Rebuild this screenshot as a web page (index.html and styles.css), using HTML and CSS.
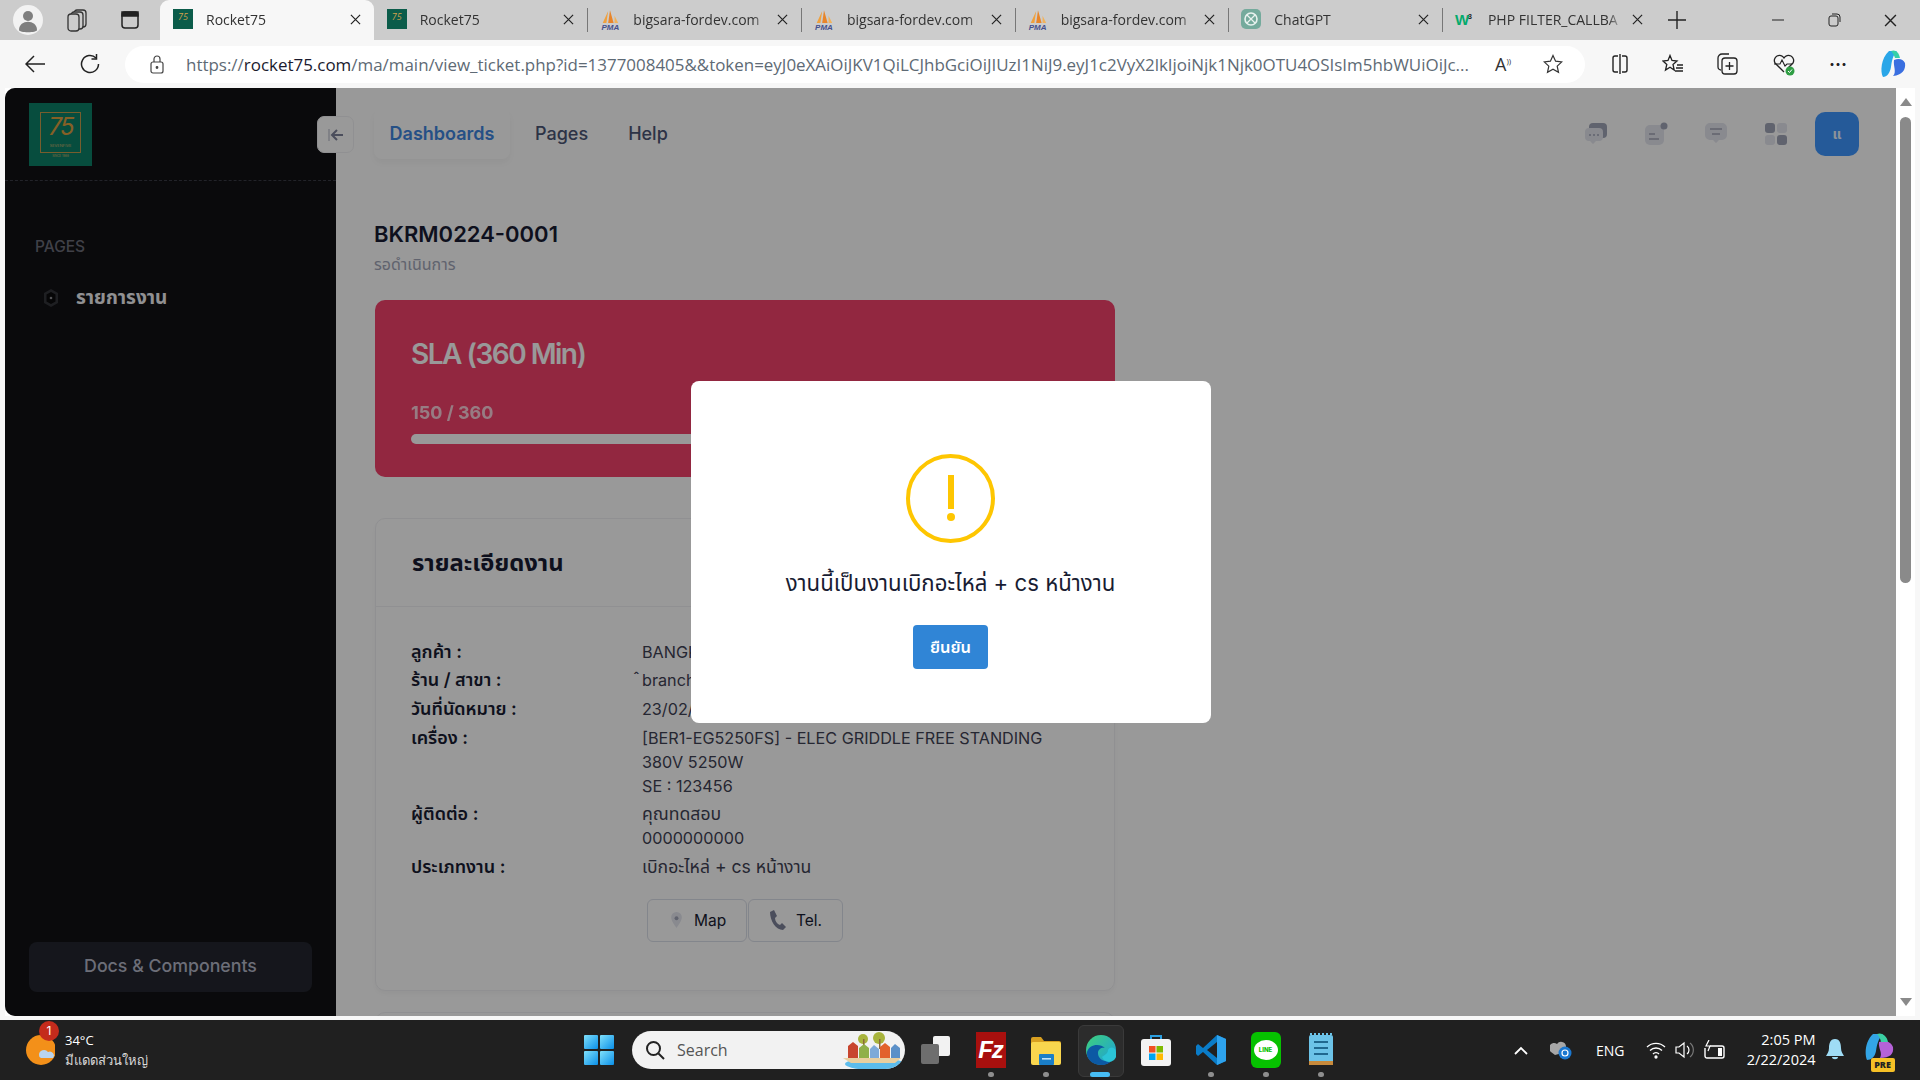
FILE: index.html
```html
<!DOCTYPE html>
<html lang="th">
<head>
    <meta charset="UTF-8">
    <title>Rocket75</title>
    <link rel="stylesheet" href="styles.css">
</head>
<body>
    <svg class="defs" width="0" height="0">
        <symbol id="pma" viewBox="0 0 22 15">
            <path d="M9 1 L7 14 H3 Z" fill="#f0a03c"/>
            <path d="M11 0 L15 14 H9 Z" fill="#e8852a"/>
            <path d="M16 6 L20 14 H16 Z" fill="#f2b25a"/>
        </symbol>
        <symbol id="x" viewBox="0 0 12 12">
            <path d="M1 1 L11 11 M11 1 L1 11" stroke="#222" stroke-width="1.3" fill="none"/>
        </symbol>
    </svg>

    <div class="tabstrip">
        <div class="strip-left">
            <span class="profile">
                <svg width="24" height="30" viewBox="0 0 24 30"><circle cx="12" cy="11" r="5" fill="#7f7f7f"/><path d="M3 25 c0-11 18-11 18 0 c0 3-18 3-18 0z" fill="#7f7f7f"/></svg>
            </span>
            <span class="strip-icon">
                <svg width="22" height="24" viewBox="0 0 22 24" fill="none" stroke="#333" stroke-width="1.3"><rect x="8" y="2" width="12" height="17" rx="3"/><rect x="5" y="4" width="12" height="17" rx="3" fill="#ccc"/><rect x="2" y="6" width="11" height="17" rx="3" fill="#ccc"/></svg>
            </span>
            <span class="strip-icon">
                <svg width="20" height="20" viewBox="0 0 20 20" fill="none" stroke="#222" stroke-width="1.5"><rect x="2" y="2" width="16" height="16" rx="3"/><rect x="2" y="2" width="16" height="4" fill="#222"/></svg>
            </span>
        </div>
        <div class="tab active">
            <span class="fav-75">75</span>
            <span class="tab-title">Rocket75</span>
            <svg class="tab-x" width="11" height="11"><use href="#x"/></svg>
        </div>
        <div class="tab">
            <span class="fav-75">75</span>
            <span class="tab-title">Rocket75</span>
            <svg class="tab-x" width="11" height="11"><use href="#x"/></svg>
        </div>
        <div class="tab sep">
            <span class="fav-pma"><svg width="20" height="14"><use href="#pma"/></svg><i>PMA</i></span>
            <span class="tab-title">bigsara-fordev.com</span>
            <svg class="tab-x" width="11" height="11"><use href="#x"/></svg>
        </div>
        <div class="tab sep">
            <span class="fav-pma"><svg width="20" height="14"><use href="#pma"/></svg><i>PMA</i></span>
            <span class="tab-title">bigsara-fordev.com</span>
            <svg class="tab-x" width="11" height="11"><use href="#x"/></svg>
        </div>
        <div class="tab sep">
            <span class="fav-pma"><svg width="20" height="14"><use href="#pma"/></svg><i>PMA</i></span>
            <span class="tab-title">bigsara-fordev.com</span>
            <svg class="tab-x" width="11" height="11"><use href="#x"/></svg>
        </div>
        <div class="tab sep">
            <svg class="fav" width="20" height="20" viewBox="0 0 20 20"><rect width="20" height="20" rx="5" fill="#74aa9c"/><circle cx="10" cy="10" r="6" fill="none" stroke="#e8f2ef" stroke-width="1.6"/><path d="M6 6 L14 14 M14 6 L6 14" stroke="#e8f2ef" stroke-width="1.2"/></svg>
            <span class="tab-title">ChatGPT</span>
            <svg class="tab-x" width="11" height="11"><use href="#x"/></svg>
        </div>
        <div class="tab sep">
            <span class="fav-w3">W<sup>3</sup></span>
            <span class="tab-title">PHP FILTER_CALLBA</span>
            <svg class="tab-x" width="11" height="11"><use href="#x"/></svg>
        </div>
        <div class="new-tab">
            <svg width="18" height="18" viewBox="0 0 18 18"><path d="M9 0 V18 M0 9 H18" stroke="#222" stroke-width="1.4"/></svg>
        </div>
        <div class="win-controls">
            <svg width="12" height="12" viewBox="0 0 12 12"><path d="M0 6 H12" stroke="#222"/></svg>
            <svg width="14" height="14" viewBox="0 0 14 14" fill="none" stroke="#222"><rect x="2" y="3" width="9" height="10" rx="2"/><path d="M5 1 H10 a3 3 0 0 1 3 3 V9"/></svg>
            <svg width="13" height="13"><use href="#x"/></svg>
        </div>
    </div>

    <div class="toolbar">
        <span class="tool-btn first">
            <svg width="20" height="18" viewBox="0 0 20 18" fill="none" stroke="#222" stroke-width="1.5"><path d="M9 1 L1 9 L9 17 M1 9 H20"/></svg>
        </span>
        <span class="tool-btn">
            <svg width="20" height="20" viewBox="0 0 20 20" fill="none" stroke="#222" stroke-width="1.5"><path d="M16 4 A8.5 8.5 0 1 0 18.5 10"/><path d="M16.5 0 V5 H11.5"/></svg>
        </span>
        <div class="address">
            <svg class="lock" width="14" height="19" viewBox="0 0 14 19" fill="none" stroke="#444" stroke-width="1.2"><rect x="1" y="7" width="12" height="11" rx="2"/><path d="M4 7 V4 a3 3 0 0 1 6 0 V7"/><circle cx="7" cy="12.5" r=".8" fill="#444"/></svg>
            <span class="url">https://<b>rocket75.com</b>/ma/main/view_ticket.php?id=1377008405&amp;&amp;token=eyJ0eXAiOiJKV1QiLCJhbGciOiJIUzI1NiJ9.eyJ1c2VyX2lkIjoiNjk1Njk0OTU4OSIsIm5hbWUiOiJc...</span>
            <span class="read">A<sup>))</sup></span>
            <svg class="star" width="20" height="20" viewBox="0 0 20 20" fill="none" stroke="#333" stroke-width="1.2"><path d="M10 1.5 L12.6 7.2 L18.8 7.9 L14.2 12.1 L15.5 18.3 L10 15.2 L4.5 18.3 L5.8 12.1 L1.2 7.9 L7.4 7.2 Z"/></svg>
        </div>
        <div class="tool-right">
            <svg width="18" height="20" viewBox="0 0 18 20" fill="none" stroke="#222" stroke-width="1.4"><path d="M7 2 H4 a2 2 0 0 0-2 2 V16 a2 2 0 0 0 2 2 H7 M11 2 H14 a2 2 0 0 1 2 2 V16 a2 2 0 0 1-2 2 H11 M9 0 V20"/></svg>
            <svg width="22" height="20" viewBox="0 0 22 20" fill="none" stroke="#222" stroke-width="1.3"><path d="M8 1.5 L10 6.5 L15 7 L11 10.5 L12.2 16 L8 13.2 L3.5 16 L4.8 10.5 L1 7 L6 6.5 Z"/><path d="M15 11 H21 M14 14 H21 M13 17 H21"/></svg>
            <svg width="22" height="24" viewBox="0 0 22 24" fill="none" stroke="#222" stroke-width="1.3"><path d="M4 18 a3 3 0 0 1-3-3 V6 a4 4 0 0 1 4-4 H12"/><rect x="5" y="6" width="15" height="16" rx="3"/><path d="M12.5 10 V18 M8.5 14 H16.5"/></svg>
            <svg width="24" height="24" viewBox="0 0 24 24"><path d="M12 20 L3 11 a5 5 0 0 1 9-5 a5 5 0 0 1 9 5 L16 16" fill="none" stroke="#222" stroke-width="1.3"/><path d="M2 12 H8 L10 8 L13 14 L15 12 H20" fill="none" stroke="#222" stroke-width="1.1"/><circle cx="18" cy="19" r="4.5" fill="#2f9e44"/><path d="M16 19 L17.5 20.5 L20 17.5" stroke="#fff" fill="none"/></svg>
            <span class="dots">···</span>
            <svg width="26" height="28" viewBox="0 0 26 28"><path d="M9 1 H17 C13 5 12 10 11 17 C10 23 7 27 3 27 C0 22 1 8 9 1Z" fill="#2aa6e8"/><path d="M14 10 C19 8 23 9 25 13 C26 20 22 25 13 26 C17 22 13 16 14 10Z" fill="#3a6fe0"/><path d="M11 1 C15 -1 19 2 20 8 L15 8 C14 5 13 3 11 1Z" fill="#37d0a8"/></svg>
        </div>
    </div>

    <div class="viewport">
        <div class="app">
            <aside class="sidebar">
                <div class="side-logo">
                    <div class="logo-mark">
                        <div class="logo-frame">
                            <span class="logo-num">75</span>
                            <span class="logo-name">SEVENFIVE</span>
                        </div>
                        <span class="logo-since">SINCE 1988</span>
                    </div>
                </div>
                <div class="side-heading">PAGES</div>
                <div class="side-item">
                    <svg width="16" height="20" viewBox="0 0 16 20" fill="none"><path d="M8 1 L15 5 V15 L8 19 L1 15 V5 Z" fill="#33343a"/><path d="M8 4 L12.5 6.5 V13.5 L8 16 L3.5 13.5 V6.5 Z" fill="#0a0a0c"/><circle cx="8" cy="10" r="1.3" fill="#8a8a90"/></svg>
                    <span>รายการงาน</span>
                </div>
                <div class="docs-btn">Docs &amp; Components</div>
            </aside>

            <main class="main">
                <header class="topbar">
                    <nav class="topnav">
                        <a class="nav-link current" href="#">Dashboards</a>
                        <a class="nav-link" href="#">Pages</a>
                        <a class="nav-link" href="#">Help</a>
                    </nav>
                    <div class="top-icons">
                        <svg width="24" height="24" viewBox="0 0 24 24"><rect x="5" y="1" width="18" height="15" rx="4" fill="#a1a5b7"/><path d="M5 6 H15 a4 4 0 0 1 4 4 V15 a4 4 0 0 1-4 4 H12 L9 22 L6 19 H5 a4 4 0 0 1-4-4 V10 a4 4 0 0 1 4-4Z" fill="#e4e6ef"/><circle cx="6" cy="13" r="1" fill="#a1a5b7"/><circle cx="10" cy="13" r="1" fill="#a1a5b7"/><circle cx="14" cy="13" r="1" fill="#a1a5b7"/></svg>
                        <svg width="24" height="24" viewBox="0 0 24 24"><rect x="1" y="3" width="19" height="20" rx="5" fill="#e4e6ef"/><circle cx="20" cy="4" r="3.5" fill="#a1a5b7"/><path d="M5 12 H11 M5 17 H15" stroke="#a1a5b7" stroke-width="1.6"/></svg>
                        <svg width="24" height="24" viewBox="0 0 24 24"><path d="M6 1 H18 a5 5 0 0 1 5 5 V13 a5 5 0 0 1-5 5 H15 L12 21 L9 18 H6 a5 5 0 0 1-5-5 V6 a5 5 0 0 1 5-5Z" fill="#e4e6ef"/><path d="M6 7 H18 M8 12 H16" stroke="#a1a5b7" stroke-width="1.6"/></svg>
                        <svg width="24" height="24" viewBox="0 0 24 24"><rect x="1" y="1" width="10" height="10" rx="3" fill="#a1a5b7"/><rect x="13" y="1" width="10" height="10" rx="3" fill="#e4e6ef"/><rect x="1" y="13" width="10" height="10" rx="3" fill="#e4e6ef"/><rect x="13" y="13" width="10" height="10" rx="3" fill="#a1a5b7"/></svg>
                        <div class="avatar">แ</div>
                    </div>
                </header>

                <h1 class="ticket-no">BKRM0224-0001</h1>
                <div class="ticket-status">รอดำเนินการ</div>

                <section class="sla-card">
                    <div class="sla-title">SLA (360 Min)</div>
                    <div class="sla-count">150 / 360</div>
                    <div class="sla-bar"></div>
                </section>

                <section class="detail-card">
                    <div class="detail-head">รายละเอียดงาน</div>
                    <div class="detail-body">
                        <div class="row"><div class="row-label">ลูกค้า :</div><div>BANGKOK RESTAURANT</div></div>
                        <div class="row"><div class="row-label">ร้าน / สาขา :</div><div><span class="stray">ˆ</span>branch</div></div>
                        <div class="row"><div class="row-label">วันที่นัดหมาย :</div><div>23/02/2024</div></div>
                        <div class="row"><div class="row-label">เครื่อง :</div><div>[BER1-EG5250FS] - ELEC GRIDDLE FREE STANDING<br>380V 5250W<br>SE : 123456</div></div>
                        <div class="row"><div class="row-label">ผู้ติดต่อ :</div><div><span class="th">คุณทดสอบ</span><br>0000000000</div></div>
                        <div class="row"><div class="row-label">ประเภทงาน :</div><div><span class="th">เบิกอะไหล่ + cs หน้างาน</span></div></div>
                        <div class="detail-actions">
                            <button class="outline-btn map-btn">
                                <svg width="11" height="16" viewBox="0 0 12 18"><path d="M6 0 a6 6 0 0 1 6 6 C12 10 8 15 6 18 C4 15 0 10 0 6 a6 6 0 0 1 6-6Z" fill="#e4e6ef"/><circle cx="6" cy="7" r="2.2" fill="#a1a5b7"/></svg>
                                Map
                            </button>
                            <button class="outline-btn tel-btn">
                                <svg width="18" height="22" viewBox="0 0 18 22"><path d="M1 3 L5 1 L8 7 L6 9 C6 12 8 15 11 16 L13 14 L17 18 L14 21 C7 21 1 12 1 3Z" fill="#7e8299"/></svg>
                                Tel.
                            </button>
                        </div>
                    </div>
                </section>
                <section class="next-card"></section>
            </main>

            <div class="toggle-btn">
                <svg width="16" height="12" viewBox="0 0 16 12"><path d="M1 0 V12" stroke="#c4c6d2" stroke-width="1.4"/><path d="M9 1 L4 6 L9 11 M4 6 H15" stroke="#7e8299" stroke-width="2" fill="none"/></svg>
            </div>

            <div class="overlay">
                <div class="modal">
                    <div class="warn-icon"><span class="warn-line"></span><span class="warn-dot"></span></div>
                    <div class="modal-text">งานนี้เป็นงานเบิกอะไหล่ + cs หน้างาน</div>
                    <button class="confirm-btn">ยืนยัน</button>
                </div>
            </div>
        </div>

        <div class="scrollbar">
            <span class="arrow-up"></span>
            <div class="scroll-track"><div class="scroll-thumb"></div></div>
            <span class="arrow-down"></span>
        </div>
    </div>

    <footer class="taskbar">
        <div class="weather">
            <svg class="weather-icon" width="30" height="36" viewBox="0 0 30 36"><circle cx="16" cy="18" r="15" fill="#f39019"/><path d="M14 23 a5 5 0 0 1 9-3 a4 4 0 0 1 5 6 H16 a3 3 0 0 1-2-3Z" fill="#b9d4ee"/></svg>
            <span class="weather-badge">1</span>
            <div class="weather-text">
                <div>34°C</div>
                <div class="weather-sub">มีแดดส่วนใหญ่</div>
            </div>
        </div>

        <svg class="start" width="30" height="30" viewBox="0 0 30 30"><defs><linearGradient id="wg" x1="0" y1="0" x2="1" y2="1"><stop offset="0" stop-color="#7fe0fb"/><stop offset="1" stop-color="#0a8fe8"/></linearGradient></defs><rect width="14" height="14" rx="1" fill="url(#wg)"/><rect x="16" width="14" height="14" rx="1" fill="url(#wg)"/><rect y="16" width="14" height="14" rx="1" fill="url(#wg)"/><rect x="16" y="16" width="14" height="14" rx="1" fill="url(#wg)"/></svg>

        <div class="search">
            <svg width="20" height="20" viewBox="0 0 20 20" fill="none" stroke="#222" stroke-width="2"><circle cx="8.5" cy="8.5" r="6.5"/><path d="M13.5 13.5 L19 19"/></svg>
            <span>Search</span>
            <svg class="beach" width="66" height="38" viewBox="0 0 66 38"><ellipse cx="36" cy="33" rx="30" ry="6" fill="#5cbcec"/><path d="M4 27 H62 L56 32 H12 Z" fill="#e9cf9f"/><circle cx="24" cy="8" r="5" fill="#a8b43c"/><circle cx="40" cy="7" r="6" fill="#a8b43c"/><rect x="24" y="8" width="1.5" height="10" fill="#8a6a3a"/><rect x="40" y="8" width="1.5" height="10" fill="#8a6a3a"/><path d="M9 27 V15 L14 11 L19 15 V27Z" fill="#c8452e"/><path d="M20 27 V17 L25 13 L30 17 V27Z" fill="#8fb04a"/><path d="M31 27 V18 L35 14 L40 18 V27Z" fill="#7eaad8"/><path d="M41 27 V16 L46 12 L51 16 V27Z" fill="#e2622c"/><path d="M52 27 V17 L56 13 L61 17 V27Z" fill="#5b90c8"/></svg>
        </div>

        <div class="task-apps">
            <div class="app-cell">
                <svg width="30" height="28" viewBox="0 0 30 28"><rect x="12" width="17" height="20" rx="2" fill="#f2f2f2"/><rect y="8" width="18" height="20" rx="2" fill="#6e6e6e"/></svg>
            </div>
            <div class="app-cell dot">
                <span class="fz-icon">Fz</span>
            </div>
            <div class="app-cell dot">
                <svg width="30" height="30" viewBox="0 0 30 30"><path d="M0 4 a2 2 0 0 1 2-2 H10 L13 6 H28 a2 2 0 0 1 2 2 V10 H0Z" fill="#d8a021"/><rect y="7" width="30" height="23" rx="2" fill="#f9d64e"/><rect x="8" y="19" width="15" height="11" rx="1" fill="#1a7ec8"/><rect x="11" y="23" width="9" height="1.6" fill="#bfe2fa"/></svg>
            </div>
            <div class="app-cell active-app">
                <svg width="30" height="30" viewBox="0 0 30 30"><defs><linearGradient id="eg" x1="0" y1="0" x2="1" y2="1"><stop offset="0" stop-color="#3fd07a"/><stop offset="1" stop-color="#1a9de0"/></linearGradient></defs><circle cx="15" cy="15" r="15" fill="url(#eg)"/><path d="M1 17 C0 26 9 30 15 30 C20 30 24 28 26 25 C18 28 12 24 12 18 C12 14 16 12 19 13 C14 8 3 9 1 17Z" fill="#0c59a4"/><path d="M16 22 a5 5 0 0 0 14-5 C29 11 23 12 22 15 C22 19 18 20 16 22Z" fill="#2bc4d6"/></svg>
            </div>
            <div class="app-cell">
                <svg width="30" height="32" viewBox="0 0 30 32"><path d="M10 6 V2 H20 V6" fill="none" stroke="#2b9fe0" stroke-width="2"/><rect y="5" width="30" height="27" rx="3" fill="#f3f3f3"/><rect x="8" y="12" width="6.5" height="6.5" fill="#f25022"/><rect x="15.5" y="12" width="6.5" height="6.5" fill="#7fba00"/><rect x="8" y="19.5" width="6.5" height="6.5" fill="#00a4ef"/><rect x="15.5" y="19.5" width="6.5" height="6.5" fill="#ffb900"/></svg>
            </div>
            <div class="app-cell dot">
                <svg width="30" height="30" viewBox="0 0 30 30"><path d="M21 0 L30 4 V26 L21 30 L7 17 L2 21 L0 19 V11 L2 9 L7 13Z" fill="#0a7cc8"/><path d="M21 7 V23 L11 15Z" fill="#202020"/><path d="M21 0 L30 4 V26 L21 30Z" fill="#2ea3ee"/></svg>
            </div>
            <div class="app-cell dot">
                <div class="line-icon"><div class="line-bubble">LINE</div></div>
            </div>
            <div class="app-cell dot">
                <svg width="24" height="34" viewBox="0 0 24 34"><rect y="2" width="24" height="30" rx="2" fill="#6cc3e8"/><path d="M2 2 V0 M6 2 V0 M10 2 V0 M14 2 V0 M18 2 V0 M22 2 V0" stroke="#6cc3e8" stroke-width="2"/><path d="M5 9 H19 M5 15 H19 M5 21 H19" stroke="#20688f" stroke-width="2"/><rect y="28" width="24" height="4" fill="#c78a3c"/></svg>
            </div>
        </div>

        <div class="tray">
            <svg class="tray-chev" width="14" height="9" viewBox="0 0 14 9"><path d="M1 8 L7 2 L13 8" stroke="#fff" stroke-width="1.8" fill="none"/></svg>
            <svg class="tray-cloud" width="22" height="20" viewBox="0 0 22 20"><path d="M1 12 a5 5 0 0 1 6-8 a5 5 0 0 1 9 2 V12 L5 15Z" fill="#a7a7a7"/><circle cx="15" cy="13" r="6.5" fill="#1b78d0"/><circle cx="15" cy="13" r="3" fill="none" stroke="#fff" stroke-width="1.2"/></svg>
            <span class="tray-lang">ENG</span>
            <svg width="20" height="18" viewBox="0 0 20 18" fill="none" stroke="#fff" stroke-width="1.3"><path d="M1 6 a13 13 0 0 1 18 0 M4 9.5 a8.5 8.5 0 0 1 12 0 M7 13 a4 4 0 0 1 6 0"/><circle cx="10" cy="16" r="1" fill="#fff"/></svg>
            <svg width="20" height="20" viewBox="0 0 20 20" fill="none" stroke="#fff" stroke-width="1.2"><path d="M1 7 H4 L9 3 V17 L4 13 H1Z"/><path d="M12 6 a5 5 0 0 1 0 8" /><path d="M15 3 a9 9 0 0 1 0 14" stroke="#777"/></svg>
            <svg width="22" height="20" viewBox="0 0 22 20" fill="none" stroke="#fff" stroke-width="1.4"><path d="M6 6 H18 a2 2 0 0 1 2 2 V16 a2 2 0 0 1-2 2 H3 a2 2 0 0 1-2-2 V8"/><path d="M5 0 L2 6 H6 L4 11" stroke-width="1.2"/><rect x="14" y="8" width="4" height="8" fill="#fff" stroke="none"/></svg>
            <div class="clock">
                <div>2:05 PM</div>
                <div>2/22/2024</div>
            </div>
            <svg width="18" height="22" viewBox="0 0 18 22"><path d="M9 0 C14 0 15 5 15 9 C15 13 17 15 18 17 H0 C1 15 3 13 3 9 C3 5 4 0 9 0Z" fill="#9fdcf5"/><path d="M6 18 H12 C12 21 6 21 6 18Z" fill="#9fdcf5"/></svg>
            <div class="copilot-pre">
                <svg width="30" height="30" viewBox="0 0 30 30"><path d="M8 1 H18 C13 6 12 12 11 18 C10 24 6 27 2 27 C-1 20 1 7 8 1Z" fill="#33a5e6"/><path d="M14 9 C21 7 26 9 28 14 C29 21 25 25 15 25 C18 20 13 15 14 9Z" fill="#b562d8"/><path d="M12 1 C17 -1 22 3 23 9 L16 9 C15 5 14 3 12 1Z" fill="#3bd0a3"/></svg>
                <span class="pre-badge">PRE</span>
            </div>
        </div>
    </footer>
</body>
</html>
```

FILE: styles.css
```css
* {
    box-sizing: border-box;
}
html, body {
    margin: 0;
    padding: 0;
    width: 1920px;
    height: 1080px;
    overflow: hidden;
}
body {
    font-family: Inter, "Noto Sans Thai", "Noto Sans", sans-serif;
    background: #f7f7f7;
    display: flex;
    flex-direction: column;
}
.defs {
    position: absolute;
}

/* browser tabs */
.tabstrip {
    height: 40px;
    background: #cccccc;
    display: flex;
    align-items: stretch;
    flex-shrink: 0;
}
.strip-left {
    width: 160px;
    display: flex;
    align-items: center;
}
.profile {
    width: 30px;
    height: 30px;
    margin-left: 13px;
    border-radius: 50%;
    background: #f2f2f2;
    display: flex;
    justify-content: center;
    align-items: center;
    overflow: hidden;
}
.strip-icon {
    width: 22px;
    display: flex;
    justify-content: center;
    margin-left: 23px;
}
.strip-icon + .strip-icon {
    margin-left: 31px;
}
.tab {
    width: 213.67px;
    display: flex;
    align-items: center;
    padding: 0 13px 2px 13px;
    font-family: "Open Sans", sans-serif;
    font-size: 14px;
    color: #333;
    position: relative;
}
.tab.active {
    background: #f7f7f7;
    border-radius: 9px 9px 0 0;
}
.tab.sep::before {
    content: "";
    position: absolute;
    left: 0;
    top: 8px;
    bottom: 8px;
    width: 1px;
    background: #777;
}
.tab-title {
    flex: 1;
    margin-left: 13px;
    white-space: nowrap;
    overflow: hidden;
    min-width: 0;
    -webkit-mask-image: linear-gradient(to right, #000 88%, transparent);
    mask-image: linear-gradient(to right, #000 88%, transparent);
}
.tab-x {
    margin-left: 8px;
    flex-shrink: 0;
}
.fav-75 {
    width: 20px;
    height: 20px;
    background: #0b5c4a;
    color: #d3a24d;
    font-size: 9px;
    font-style: italic;
    text-align: center;
    line-height: 15px;
    flex-shrink: 0;
}
.fav {
    flex-shrink: 0;
}
.fav-pma {
    width: 20px;
    flex-shrink: 0;
    display: flex;
    flex-direction: column;
    align-items: center;
    padding-top: 3px;
}
.fav-pma i {
    font-family: "Liberation Sans", sans-serif;
    font-size: 8px;
    font-weight: 700;
    line-height: 8px;
    color: #44508c;
}
.fav-w3 {
    width: 20px;
    font-family: "Liberation Sans", sans-serif;
    font-weight: 700;
    font-size: 15px;
    color: #04aa6d;
    flex-shrink: 0;
    white-space: nowrap;
    letter-spacing: -1px;
}
.fav-w3 sup {
    font-size: 7px;
    color: #222;
    vertical-align: 6px;
    line-height: 0;
}
.new-tab {
    width: 42px;
    display: flex;
    align-items: center;
    justify-content: center;
}
.win-controls {
    display: flex;
    align-items: center;
    margin-left: 74px;
    gap: 43px;
}

/* address bar */
.toolbar {
    height: 48px;
    background: #f7f7f7;
    display: flex;
    align-items: center;
    flex-shrink: 0;
}
.tool-btn {
    width: 55px;
    display: flex;
    justify-content: center;
}
.tool-btn.first {
    margin-left: 7px;
}
.address {
    width: 1460px;
    height: 37px;
    margin-left: 8px;
    background: #fff;
    border-radius: 19px;
    display: flex;
    align-items: center;
    padding-left: 25px;
}
.lock {
    flex-shrink: 0;
}
.url {
    width: 1290px;
    margin-left: 22px;
    font-family: "Open Sans", sans-serif;
    font-size: 16.95px;
    color: #5e6a75;
    white-space: nowrap;
    overflow: hidden;
}
.url b {
    font-weight: 400;
    color: #1a1a2e;
}
.read {
    margin-left: 19px;
    font-family: "Open Sans", sans-serif;
    font-size: 18px;
    color: #333;
    width: 30px;
}
.read sup {
    font-size: 8px;
}
.star {
    margin-left: 18px;
}
.tool-right {
    flex: 1;
    display: flex;
    align-items: center;
    justify-content: space-between;
    padding: 0 14px 0 26px;
}
.dots {
    font-size: 18px;
    font-weight: 700;
    color: #222;
}

/* page */
.viewport {
    height: 928px;
    display: flex;
    flex-shrink: 0;
    margin-left: 5px;
    margin-right: 5px;
    background: #fff;
}
.app {
    width: 1891px;
    display: flex;
    position: relative;
    overflow: hidden;
    border-radius: 10px 0 0 10px;
}
.sidebar {
    width: 331px;
    flex-shrink: 0;
    background: #111114;
    display: flex;
    flex-direction: column;
    padding-bottom: 24px;
}
.side-logo {
    height: 93px;
    padding: 15px 0 0 24px;
    border-bottom: 1px dashed #3a3b45;
}
.logo-mark {
    width: 63px;
    height: 63px;
    background: #0c8068;
    padding: 9px 11px 0;
    text-align: center;
}
.logo-frame {
    height: 41px;
    border: 1px solid #c79b4c;
    display: flex;
    flex-direction: column;
    align-items: center;
    padding-top: 2px;
}
.logo-num {
    color: #e0a040;
    font-size: 24px;
    font-style: italic;
    line-height: 24px;
    letter-spacing: -2px;
}
.logo-name {
    color: #d6b46c;
    font-size: 4px;
    margin-top: 4px;
    white-space: nowrap;
}
.logo-since {
    display: block;
    color: #d6b46c;
    font-size: 3px;
    margin-top: 1px;
    white-space: nowrap;
}
.side-heading {
    margin: 57px 0 0 30px;
    font-size: 15.5px;
    font-weight: 500;
    line-height: 18px;
    color: #6b6c78;
}
.side-item {
    display: flex;
    align-items: center;
    gap: 17px;
    margin: 30px 0 0 38px;
    font-size: 19px;
    font-weight: 700;
    color: #f1f1f4;
    line-height: 24px;
}
.docs-btn {
    margin: auto 24px 0;
    height: 50px;
    padding-bottom: 3px;
    border-radius: 8px;
    background: #23262f;
    display: flex;
    align-items: center;
    justify-content: center;
    color: #b5b7c8;
    font-size: 17.75px;
    font-weight: 500;
}

.main {
    flex: 1;
    background: #fff;
    padding-left: 38px;
    padding-right: 37px;
    overflow: hidden;
}
.topbar {
    height: 92px;
    display: flex;
    align-items: center;
    justify-content: space-between;
}
.topnav {
    display: flex;
}
.nav-link {
    font-size: 18px;
    font-weight: 500;
    color: #4b5675;
    text-decoration: none;
    padding: 0 20px;
    line-height: 50px;
    height: 50px;
    border-radius: 8px;
}
.nav-link.current {
    padding: 0;
    width: 136px;
    margin-right: 5px;
    text-align: center;
    box-shadow: 0 4px 6px rgba(0, 0, 0, 0.04);
    color: #3e86e0;
    font-weight: 600;
}
.top-icons {
    display: flex;
    align-items: center;
    gap: 36px;
}
.avatar {
    width: 44px;
    height: 44px;
    margin-left: -9px;
    border-radius: 10px;
    background: #3e97ff;
    color: #eaf4ff;
    display: flex;
    align-items: center;
    justify-content: center;
    font-size: 14px;
    font-weight: 700;
}
.ticket-no {
    margin: 40px 0 0;
    font-size: 22px;
    font-weight: 600;
    line-height: 28px;
    color: #181c32;
}
.ticket-status {
    margin-top: 7px;
    font-size: 16px;
    line-height: 18px;
    color: #a1a5b7;
}
.sla-card {
    width: 740px;
    height: 177px;
    margin: 27px 0 0 1px;
    border-radius: 10px;
    background: #f3416c;
    padding: 36px 36px 0;
    color: #fff;
}
.sla-title {
    font-size: 28px;
    font-weight: 600;
    line-height: 36px;
    letter-spacing: -1.5px;
}
.sla-count {
    margin-top: 29px;
    font-size: 18px;
    font-weight: 700;
    line-height: 24px;
    opacity: 0.75;
}
.sla-bar {
    width: 668px;
    height: 10px;
    margin-top: 9px;
    border-radius: 5px;
    background: #fff;
}
.detail-card {
    width: 740px;
    height: 473px;
    margin: 41px 0 0 1px;
    border-radius: 10px;
    border: 1px solid #f1f1f4;
    box-shadow: 0 3px 4px rgba(0, 0, 0, 0.03);
}
.detail-head {
    height: 88px;
    padding-left: 36px;
    padding-top: 2px;
    display: flex;
    align-items: center;
    border-bottom: 1px solid #f1f1f4;
    font-size: 23.8px;
    font-weight: 700;
    color: #181c32;
}
.detail-body {
    padding: 32.5px 0 0 35px;
    display: flex;
    flex-direction: column;
    gap: 4.7px;
    font-size: 16.2px;
    line-height: 24px;
    color: #3f4254;
}
.row {
    display: flex;
}
.row-label {
    width: 231px;
    flex-shrink: 0;
    font-size: 18px;
    font-weight: 600;
    color: #181c32;
}
.th {
    font-size: 17.6px;
}
.stray {
    display: inline-block;
    width: 0;
    position: relative;
    left: -9px;
    top: -2px;
}
.detail-actions {
    display: flex;
    margin: 15px 0 0 236px;
    gap: 1px;
}
.outline-btn {
    height: 43px;
    background: #fff;
    border: 1px solid #dbdfe9;
    border-radius: 6px;
    display: flex;
    align-items: center;
    font-family: inherit;
    font-size: 15.5px;
    color: #181c32;
}
.map-btn {
    width: 100px;
    padding-left: 23px;
    gap: 12px;
}
.tel-btn {
    width: 95px;
    padding-left: 20px;
    gap: 9px;
}
.next-card {
    width: 740px;
    height: 60px;
    margin: 21px 0 0 1px;
    border: 1px solid #f1f1f4;
    border-radius: 10px;
}
.toggle-btn {
    position: absolute;
    left: 312px;
    top: 28px;
    width: 37px;
    height: 37px;
    background: #fff;
    border: 1px solid #f1f1f4;
    border-radius: 7px;
    display: flex;
    align-items: center;
    justify-content: center;
}

/* swal style popup */
.overlay {
    position: absolute;
    left: 0;
    top: 0;
    right: 0;
    bottom: 0;
    background: rgba(0, 0, 0, 0.4);
    display: flex;
    align-items: center;
    justify-content: center;
}
.modal {
    width: 520px;
    height: 342px;
    background: #fff;
    border-radius: 8px;
    display: flex;
    flex-direction: column;
    align-items: center;
    padding-top: 73px;
}
.warn-icon {
    width: 89px;
    height: 89px;
    border: 4px solid #fec601;
    border-radius: 50%;
    display: flex;
    flex-direction: column;
    align-items: center;
    padding-top: 17px;
}
.warn-line {
    width: 6px;
    height: 34px;
    background: #fec601;
}
.warn-dot {
    width: 8px;
    height: 8px;
    margin-top: 4px;
    border-radius: 50%;
    background: #fec601;
}
.modal-text {
    margin-top: 25px;
    font-size: 22.2px;
    line-height: 30px;
    color: #181c32;
}
.confirm-btn {
    width: 75px;
    height: 44px;
    margin-top: 27px;
    background: #3085d6;
    border: none;
    border-radius: 4px;
    color: #fff;
    font-family: inherit;
    font-size: 16.5px;
    font-weight: 600;
}

/* scrollbar */
.scrollbar {
    width: 19px;
    background: #fff;
    display: flex;
    flex-direction: column;
    align-items: center;
    padding-top: 10px;
}
.arrow-up, .arrow-down {
    width: 0;
    height: 0;
    border-left: 6px solid transparent;
    border-right: 6px solid transparent;
    flex-shrink: 0;
}
.arrow-up {
    border-bottom: 8px solid #8a8a8a;
}
.arrow-down {
    border-top: 8px solid #8a8a8a;
    margin: 0 0 10px;
}
.scroll-track {
    flex: 1;
    width: 11px;
    margin-top: 11px;
}
.scroll-thumb {
    height: 466px;
    border-radius: 6px;
    background: #8a8a8a;
}

/* windows taskbar */
.taskbar {
    height: 60px;
    margin-top: 4px;
    background: #202020;
    flex-shrink: 0;
    display: flex;
    align-items: center;
    color: #fff;
}
.weather {
    width: 584px;
    display: flex;
    align-items: center;
    padding-left: 25px;
    position: relative;
    flex-shrink: 0;
}
.weather-badge {
    position: absolute;
    left: 39px;
    top: -9px;
    width: 20px;
    height: 20px;
    border-radius: 50%;
    background: #c42b1c;
    font-size: 12px;
    text-align: center;
    line-height: 20px;
}
.weather-text {
    margin-left: 10px;
    font-family: "Open Sans", sans-serif;
    font-size: 13px;
    line-height: 20px;
}
.weather-sub {
    color: #d8d8d8;
}
.start {
    flex-shrink: 0;
}
.search {
    width: 273px;
    height: 38px;
    margin-left: 18px;
    border-radius: 19px;
    background: #f2f2f2;
    display: flex;
    align-items: center;
    padding-left: 13px;
    font-family: "Open Sans", sans-serif;
    font-size: 16px;
    color: #555;
    flex-shrink: 0;
}
.search span {
    margin-left: 12px;
    flex: 1;
}
.beach {
    flex-shrink: 0;
    border-radius: 0 19px 19px 0;
}
.task-apps {
    display: flex;
    margin-left: 3px;
    flex-shrink: 0;
}
.app-cell {
    width: 55px;
    height: 50px;
    display: flex;
    align-items: center;
    justify-content: center;
    position: relative;
}
.app-cell.dot::after {
    content: "";
    position: absolute;
    bottom: -2px;
    left: 25px;
    width: 6px;
    height: 5px;
    border-radius: 3px;
    background: #8e8e8e;
}
.app-cell.active-app::before {
    content: "";
    position: absolute;
    left: 5px;
    top: 0;
    width: 44px;
    height: 50px;
    background: #2c2c2c;
    border: 1px solid #3a3a3a;
    border-radius: 6px;
}
.app-cell.active-app svg {
    position: relative;
}
.app-cell.active-app::after {
    content: "";
    position: absolute;
    bottom: -2px;
    left: 17px;
    width: 20px;
    height: 5px;
    border-radius: 3px;
    background: #47bdf5;
}
.fz-icon {
    width: 30px;
    height: 36px;
    background: #a8100e;
    color: #fff;
    font-family: "Liberation Sans", sans-serif;
    font-size: 24px;
    font-weight: 700;
    font-style: italic;
    text-align: center;
    line-height: 36px;
    letter-spacing: -1px;
}
.line-icon {
    width: 30px;
    height: 36px;
    background: #06c100;
    border-radius: 6px;
    display: flex;
    align-items: center;
    justify-content: center;
}
.line-bubble {
    width: 24px;
    height: 20px;
    border-radius: 50%;
    background: #fff;
    color: #06c100;
    font-size: 6px;
    font-weight: 800;
    text-align: center;
    line-height: 20px;
}
.tray {
    flex: 1;
    display: flex;
    align-items: center;
    padding-left: 166px;
    font-family: "Open Sans", sans-serif;
    font-size: 14.5px;
}
.tray-lang {
    margin: 0 21px 0 24px;
    font-size: 14px;
}
.tray svg + svg {
    margin-left: 9px;
}
.tray .tray-cloud {
    margin-left: 22px;
}
.clock {
    width: 90px;
    text-align: right;
    line-height: 20px;
    margin-right: 10px;
}
.copilot-pre {
    position: relative;
    margin-left: 21px;
    height: 34px;
}
.pre-badge {
    position: absolute;
    left: 6px;
    bottom: -5px;
    width: 24px;
    height: 14px;
    background: #f6c026;
    border-radius: 2px;
    color: #222;
    font-size: 9px;
    font-weight: 800;
    text-align: center;
    line-height: 14px;
}
```
